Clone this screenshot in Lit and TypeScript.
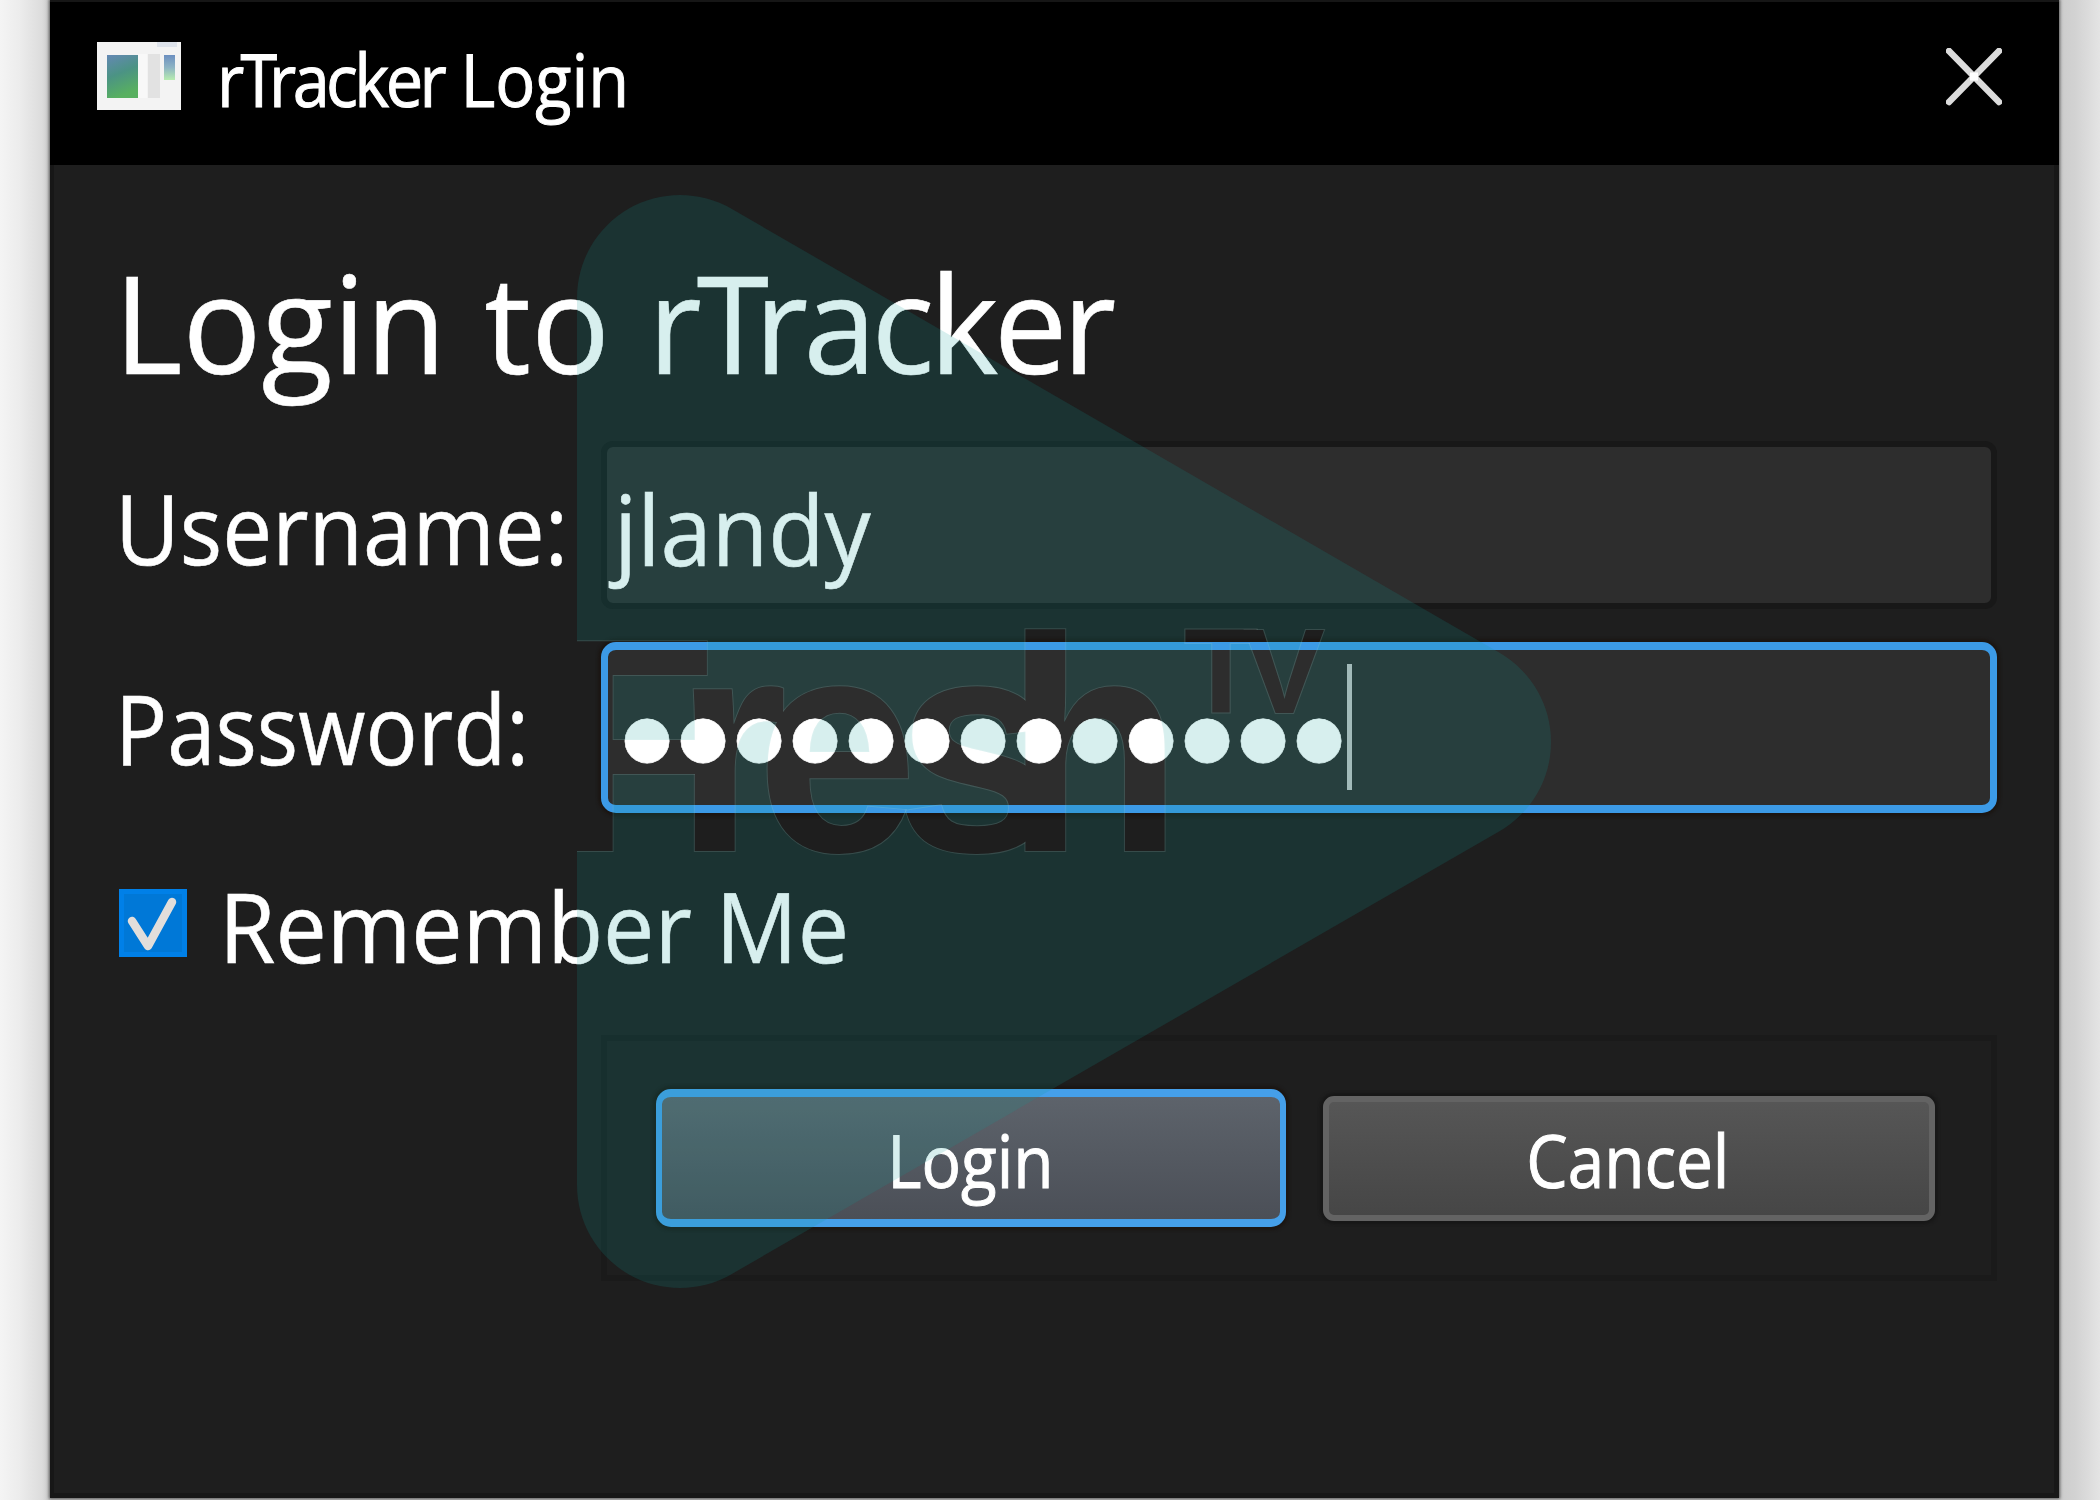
import { LitElement, html, css, svg } from "lit";
import { customElement, property } from "lit/decorators.js";

/* Translucent play-shaped badge with the brand name knocked out of it. */
@customElement("brand-overlay")
class BrandOverlay extends LitElement {
  static styles = css`
    :host { display: block; }
    .art { display: block; width: 2100px; height: 1500px; }
    .word { font-family: "Liberation Sans", Arial, sans-serif; font-weight: 700; }
    .edge { fill: none; stroke: #ffffff; stroke-opacity: 0.12; stroke-width: 2; }
    .cut { fill: #000; stroke: none; }
  `;

  private word(kind: string) {
    return svg`
      <g class="word ${kind}">
        <text font-size="305" transform="translate(558 851) scale(0.85 1)">F</text>
        <text font-size="306" transform="translate(0 851) scale(0.95 1)"
          x="710 796 943 1058">resh</text>
        <text font-size="121" transform="translate(0 713)" x="1184 1244">TV</text>
      </g>`;
  }

  render() {
    const shape =
      "M577 298A103 103 0 0 1 731.5 208.8L1499.5 652.8A103 103 0 0 1 1499.5 831.2L731.5 1274.2A103 103 0 0 1 577 1185Z";
    return html`
      <svg class="art" viewBox="0 0 2100 1500">
        <defs>
          <mask id="cutout" maskUnits="userSpaceOnUse" x="0" y="0" width="2100" height="1500">
            <rect width="2100" height="1500" fill="#fff"></rect>
            ${this.word("cut")}
          </mask>
          <clipPath id="shape"><path d=${shape}></path></clipPath>
        </defs>
        <path d=${shape} fill="rgb(12,158,151)" fill-opacity="0.164" mask="url(#cutout)"></path>
        <g clip-path="url(#shape)"><g mask="url(#cutout)">${this.word("edge")}</g></g>
      </svg>`;
  }
}

@customElement("push-button")
class PushButton extends LitElement {
  @property() label = "";
  @property({ type: Boolean, reflect: true }) primary = false;

  static styles = css`
    :host { display: block; box-sizing: border-box; height: 125px; width: 612px; }
    :host([primary]) { height: 138px; width: 630px; }
    .face {
      box-sizing: border-box; width: 100%; height: 100%;
      display: flex; align-items: center; justify-content: center;
      border: 6px solid #636363; border-radius: 11px;
      background: linear-gradient(#565656, #464646);
      box-shadow: 0 0 3px 3px #171717;
      font: 400 73px "Open Sans", "Noto Sans", sans-serif; line-height: 100px;
      color: #fff; -webkit-text-stroke: 1px #fff;
    }
    :host([primary]) .face {
      border: 7px solid #459fe9; border-width: 8px 6px; border-radius: 15px;
      background: linear-gradient(#5d636b, #4b4f57);
      box-shadow: 0 0 3px 3px #1b1613;
    }
    .txt { display: block; padding-top: 4px; transform: translateX(-1px) scaleX(0.9); }
  `;

  render() {
    return html`<div class="face"><span class="txt">${this.label}</span></div>`;
  }
}

@customElement("app-root")
class AppRoot extends LitElement {
  private user = "jlandy";
  private secret = "●".repeat(13);

  static styles = css`
    :host {
      display: block; position: relative; width: 2100px; height: 1500px; overflow: hidden;
      font-family: "Open Sans", "Noto Sans", sans-serif; color: #fff;
      background: linear-gradient(90deg, #f4f4f4 0, #ececec 20px, #dcdcdc 42px, #c8c8c8 50px, #cccccc 2059px, #d2d2d2 2075px, #e4e4e4 2100px);
    }
    .window {
      box-sizing: border-box; width: 2009px; height: 1498px; margin-left: 50px;
      background: #1e1e1e; border: solid #171717; border-width: 0 5px 5px 4px;
      box-shadow: 0 0 3px 1px #555;
    }
    .titlebar {
      box-sizing: border-box; height: 165px; margin: 0 -5px 0 -4px; padding: 0 57px 0 47px;
      background: #000; border-top: 2px solid #161616;
      display: flex; align-items: flex-start;
    }
    .appicon { width: 84px; height: 68px; margin-top: 40px; flex: none; }
    .title {
      font-size: 73px; line-height: 100px; margin: 27px 0 0 36px; white-space: nowrap;
      transform-origin: 0 0; transform: scaleX(0.913); -webkit-text-stroke: 1px #fff;
    }
    .title .brand { letter-spacing: -4px; }
    .title .cap { letter-spacing: -9px; }
    .close { width: 56px; height: 58px; margin: 46px 0 0 auto; flex: none; }
    .body { padding: 67px 57px 0 65px; -webkit-text-stroke: 0.6px #fff; }
    .heading {
      margin: 0 0 0 -5px; font-weight: 400; font-size: 136px; line-height: 179px; white-space: nowrap;
      word-spacing: 4px; transform-origin: 0 0; transform: scaleX(0.965);
    }
    .heading .brand { letter-spacing: -5px; }
    .heading .cap { letter-spacing: -15px; }
    .row { display: flex; align-items: center; height: 172px; margin-top: 30px; }
    .row.user { margin-top: 28px; }
    .label { width: 486px; margin-left: -4px; flex: none; font-size: 97px; line-height: 130px; white-space: nowrap; }
    .txt { display: inline-block; transform-origin: 0 50%; transform: scaleX(0.895); }
    .user .txt { transform: scaleX(0.917); }
    .user .value.txt { transform: scaleX(0.95); }
    .user .label { padding-top: 4px; }
    .user .value { padding-top: 5px; }
    .field {
      box-sizing: border-box; flex: 1; height: 168px; display: flex; align-items: center;
      border: 6px solid #181818; border-radius: 12px; background: #2d2d2d;
      font-size: 97px; line-height: 130px; white-space: nowrap; padding-left: 7px;
    }
    .field.focus {
      height: 171px; border: solid #3c9ae6; border-width: 8px 7px; border-radius: 15px;
      padding-left: 11px; box-shadow: 0 0 3px 3px #1b1613;
    }
    .dots { display: flex; padding-top: 18px; font-family: "DejaVu Sans", sans-serif; font-size: 58px; line-height: 90px; }
    .dot { width: 56px; text-align: center; }
    .caret { width: 5px; height: 126px; background: #c0c0c0; }
    .remember { display: flex; align-items: center; height: 68px; margin-top: 76px; font-size: 97px; }
    .check { width: 68px; height: 68px; flex: none; margin-right: 32px; }
    .remember .txt { line-height: 130px; padding-top: 3px; white-space: nowrap; transform: scaleX(0.942); }
    .group {
      box-sizing: border-box; height: 246px; margin: 78px 0 0 482px; border: 6px solid #1a1a1a;
      display: flex; align-items: center; padding: 0 56px 0 49px; justify-content: space-between;
    }
    .overlay { position: absolute; left: 0; top: 0; pointer-events: none; }
  `;

  private brand() {
    return html`<span class="brand">r<span class="cap">T</span>racker</span>`;
  }

  render() {
    return html`
      <div class="window">
        <div class="titlebar">
          <svg class="appicon" viewBox="0 0 84 68">
            <defs>
              <linearGradient id="g" x1="0" y1="0" x2="0.3" y2="1">
                <stop offset="0" stop-color="#6488b4"></stop>
                <stop offset="0.5" stop-color="#4b9384"></stop>
                <stop offset="1" stop-color="#58b060"></stop>
              </linearGradient>
              <linearGradient id="h" x1="0" y1="0" x2="0" y2="1">
                <stop offset="0" stop-color="#6c8fc0"></stop>
                <stop offset="0.5" stop-color="#8db4c4"></stop>
                <stop offset="1" stop-color="#b8ecb0"></stop>
              </linearGradient>
            </defs>
            <rect width="84" height="68" fill="#f3f3f3"></rect>
            <rect x="60" y="0" width="20" height="5" fill="#dde2ea"></rect>
            <rect x="10" y="13" width="31" height="43" fill="url(#g)"></rect>
            <rect x="41" y="12" width="9" height="44" fill="#f8f8f8"></rect>
            <rect x="51" y="12" width="12" height="44" fill="#e2e2e2"></rect>
            <rect x="67" y="13" width="11" height="25" fill="url(#h)"></rect>
          </svg>
          <div class="title">${this.brand()} Login</div>
          <svg class="close" viewBox="0 0 56 58">
            <path d="M3 3L53 54M53 3L3 54" stroke="#dcdcdc" stroke-width="6.5" stroke-linecap="round"></path>
            <rect x="24" y="24.500" width="8" height="8" fill="#fff"></rect>
          </svg>
        </div>
        <div class="body">
          <h1 class="heading">Login to ${this.brand()}</h1>
          <div class="row user">
            <div class="label"><span class="txt">Username:</span></div>
            <div class="field"><span class="value txt">${this.user}</span></div>
          </div>
          <div class="row">
            <div class="label"><span class="txt">Password:</span></div>
            <div class="field focus">
              <div class="dots">${[...this.secret].map((c) => html`<span class="dot">${c}</span>`)}</div>
              <div class="caret"></div>
            </div>
          </div>
          <div class="remember">
            <svg class="check" viewBox="0 0 68 68">
              <rect width="68" height="68" fill="#0080e8"></rect>
              <rect x="5" y="5" width="58" height="58" fill="#0078d7"></rect>
              <path d="M13 32L29 57L53 13" fill="none" stroke="#e2dedb" stroke-width="8.5" stroke-linecap="round" stroke-linejoin="round"></path>
            </svg>
            <span class="txt">Remember Me</span>
          </div>
          <div class="group">
            <push-button primary label="Login"></push-button>
            <push-button label="Cancel"></push-button>
          </div>
        </div>
      </div>
      <brand-overlay class="overlay"></brand-overlay>
    `;
  }
}
